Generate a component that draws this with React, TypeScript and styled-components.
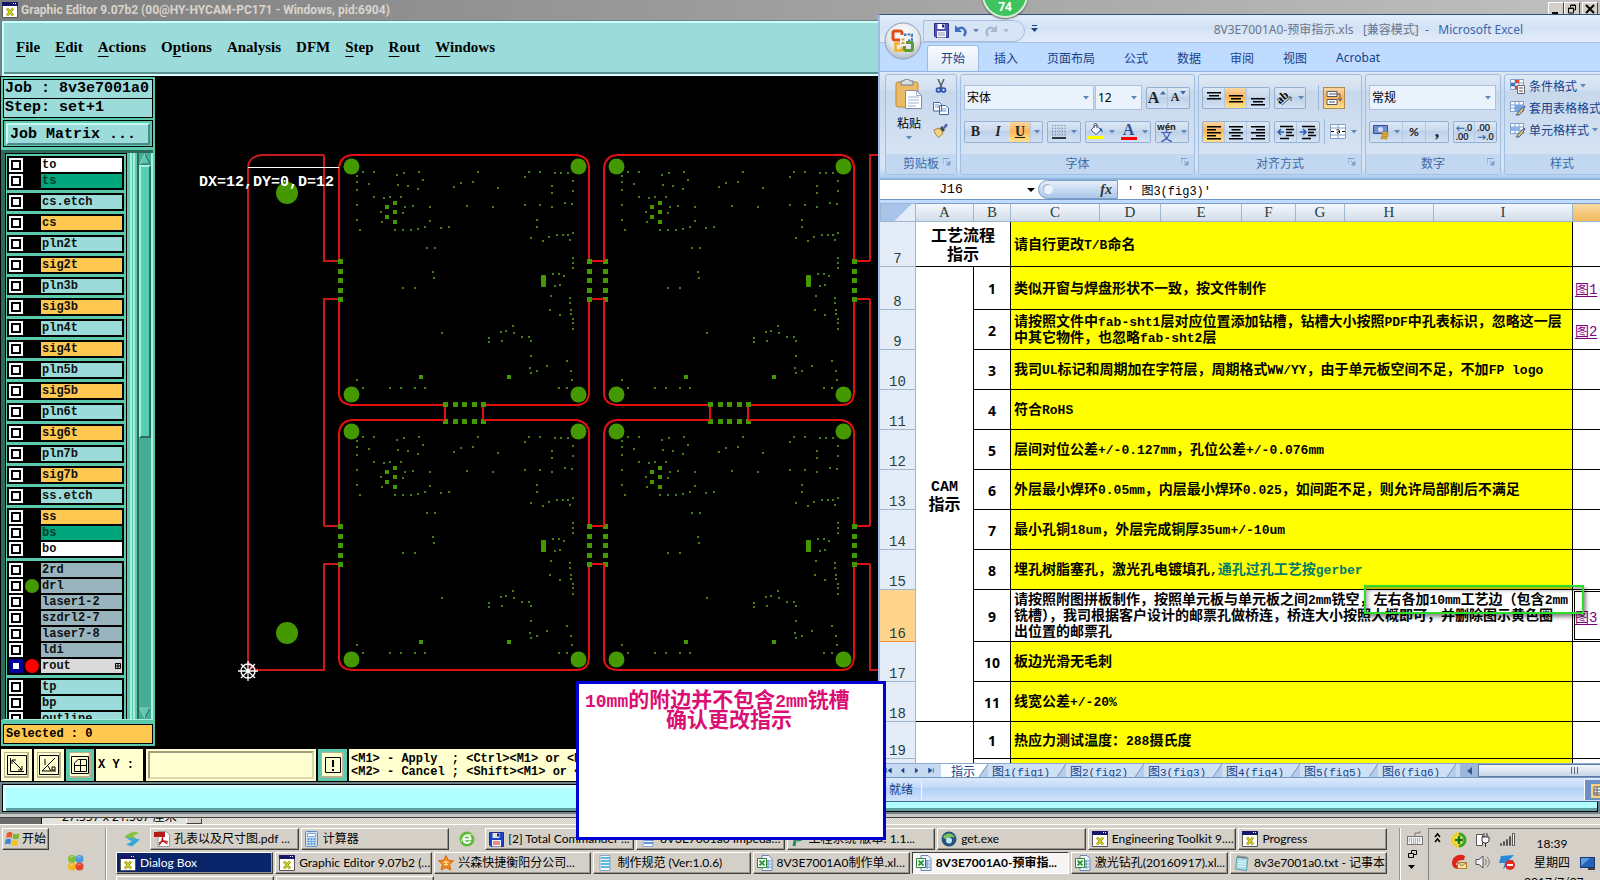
import React from 'react';
import styled, { createGlobalStyle, css } from 'styled-components';

const MONO = '"Liberation Mono", "Noto Sans CJK SC", monospace';
const SERIF = '"Liberation Serif", "Noto Sans CJK SC", serif';
const UI = '"Noto Sans", "Noto Sans CJK SC", sans-serif';
const TASK = 'Lato, "Noto Sans CJK SC", sans-serif';
const CJK = '"Noto Sans CJK SC", sans-serif';

const Global = createGlobalStyle`
  * { box-sizing: border-box; }
  body { margin: 0; overflow: hidden; font-family: ${UI}; font-size: 12px; color: #000; }
  button, input, select { font: inherit; color: inherit; margin: 0; border-radius: 0; }
  button { padding: 0; border: 0; background: none; text-align: left; white-space: nowrap; }
  svg { display: block; flex: none; }
`;

const Desktop = styled.div`
  position: relative;
  display: flex;
  flex-direction: column;
  height: 100vh;
  min-height: 600px;
  overflow: hidden;
  background: #d4d0c8;
`;

/* ---------- Mixed Chinese / half-width text ---------- */

const Half = styled.span<{ $size: number }>`
  font-family: ${MONO};
  font-size: ${(p) => p.$size}px;
  line-height: 0;
`;

function Mixed({ text, size }: { text: string; size: number }) {
  const parts = text.split(/([\x20-\x7e]+)/).filter(Boolean);
  return (
    <>
      {parts.map((p, i) => (/^[\x20-\x7e]/.test(p) ? <Half key={i} $size={size}>{p}</Half> : <React.Fragment key={i}>{p}</React.Fragment>))}
    </>
  );
}

/* ---------- Graphic editor window ---------- */

const Editor = styled.section`
  flex: 1;
  min-height: 0;
  display: flex;
  flex-direction: column;
  background: #6e8486;
`;

const TitleBar = styled.header`
  display: flex;
  align-items: center;
  gap: 3px;
  height: 20px;
  padding: 0 0 0 2px;
  flex: none;
  background: linear-gradient(90deg, #7f7f7f, #c0c0c0);
  color: #d8d4cc;
  font: bold 12px Roboto, sans-serif;
  white-space: nowrap;
`;

const WinButtons = styled.div`
  display: flex;
  margin: 2px 2px 0 auto;
  align-self: flex-start;
`;

const WinButton = styled.button<{ $apart?: boolean }>`
  width: 16px;
  height: 14px;
  display: flex;
  align-items: center;
  justify-content: center;
  margin-left: ${(p) => (p.$apart ? 2 : 0)}px;
  background: #d4d0c8;
  border: 1px solid;
  border-color: #fff #404040 #404040 #fff;
`;

const MenuBar = styled.nav`
  display: flex;
  align-items: center;
  gap: 15px;
  height: 55px;
  flex: none;
  margin: 1px 0 0 2px;
  padding: 0 12px 4px;
  background: #9bdcdb;
  border: 2px solid;
  border-color: #c8fffb #c8fffb #d8fffc #c8fffb;
  box-shadow: inset 0 -2px #5a8f92;
`;

const MenuItem = styled.button`
  font: bold 15px/20px ${SERIF};
  u { text-underline-offset: 4px; text-decoration-thickness: 1px; }
`;

const Work = styled.div`
  flex: 1;
  min-height: 0;
  display: flex;
  background: #000;
  padding: 1px 0 2px;
`;

const SidePanel = styled.aside`
  width: 155px;
  flex: none;
  display: flex;
  flex-direction: column;
  padding: 2px;
  background: #5cc9ad;
  border-left: 1px solid #000;
`;

const InfoBox = styled.div`
  height: 20px;
  flex: none;
  padding: 0 1px;
  border: 1px solid #000;
  background: #9bdbda;
  font: bold 15px/18px ${MONO};
  white-space: nowrap;
  & + & { border-top: 0; height: 19px; }
`;

const MatrixFrame = styled.div`
  height: 27px;
  flex: none;
  margin: 2px 0 3px;
  padding: 2px;
  border: 1px solid #000;
  background: #5cc9ad;
`;

const MatrixButton = styled.button`
  width: 100%;
  height: 22px;
  padding: 0 2px;
  background: #9bdbda;
  border: 2px solid;
  border-color: #c6fbf5 #4b8b8b #4b8b8b #c6fbf5;
  font: bold 15px/17px ${MONO};
`;

const LayerArea = styled.div`
  flex: 1;
  min-height: 0;
  display: flex;
  margin: 0 0 0 -2px;
  border-left: 4px solid #2f6b5c;
  border-top: 3px solid #2f6b5c;
  border-bottom: 1px solid #a6f0de;
`;

const LayerList = styled.div`
  width: 122px;
  flex: none;
  display: flex;
  flex-direction: column;
  gap: 3px;
  padding: 2px 2px 0 1px;
  overflow: hidden;
  border: 1px solid #000;
  border-bottom: 0;
`;

const LayerGroup = styled.div`
  flex: none;
  padding: 1px 2px;
  background: #000;
`;

const LayerRow = styled.label`
  display: flex;
  align-items: center;
  height: 16px;
`;

const LayerCheck = styled.input<{ $active?: boolean }>`
  appearance: none;
  width: 14px;
  height: 14px;
  flex: none;
  border: 2px solid ${(p) => (p.$active ? '#00009c' : '#fff')};
  outline: 0;
  background: #fff;
  box-shadow: inset 0 0 0 2px ${(p) => (p.$active ? '#00009c' : '#000')};
`;

const LayerDot = styled.span<{ $color?: string }>`
  width: 14px;
  height: 14px;
  margin: 0 2px;
  border-radius: 7px;
  background: ${(p) => p.$color || 'transparent'};
`;

const LayerName = styled.span<{ $color: string; $dark?: boolean }>`
  flex: 1;
  height: 14px;
  padding: 0 1px;
  display: flex;
  justify-content: space-between;
  align-items: center;
  background: ${(p) => p.$color};
  color: ${(p) => (p.$dark ? '#003d2c' : '#101010')};
  font: bold 12px/14px ${MONO};
`;

const Rail = styled.div`
  flex: 1;
  background: linear-gradient(90deg, #5cc9ad 3px, #a6f0de 3px, #a6f0de 5px, #5cc9ad 5px, #5cc9ad 6px, #a6f0de 6px, #a6f0de 8px, #5cc9ad 8px);
`;

const ScrollTrack = styled.div`
  width: 16px;
  flex: none;
  display: flex;
  flex-direction: column;
  align-items: stretch;
  background: #43ad97;
  border-left: 2px solid #2f6b5c;
  border-right: 2px solid #a6f0de;
`;

const ScrollThumb = styled.div`
  flex: 0 1 273px;
  background: #52d0b1;
  border: 2px solid;
  border-color: #a6f0de #2f6b5c #2f6b5c #a6f0de;
`;

const ScrollSpace = styled.div`
  flex: 1;
`;

const Selected = styled.div`
  height: 20px;
  flex: none;
  margin-top: 4px;
  padding: 0 2px;
  border: 1px solid #000;
  background: #ffc850;
  font: bold 12px/18px ${MONO};
`;

const Canvas = styled.svg`
  flex: 1;
  min-width: 0;
  height: 100%;
`;

const CommandBar = styled.div`
  display: flex;
  align-items: stretch;
  gap: 2px;
  height: 34px;
  flex: none;
  padding: 1px 0 1px 1px;
  background: #000;
`;

const ToolButton = styled.button<{ $teal?: boolean; $w: number }>`
  width: ${(p) => p.$w}px;
  flex: none;
  display: flex;
  align-items: center;
  justify-content: center;
  background: #ffffcf;
  border: 3px solid ${(p) => (p.$teal ? '#5cc9ad' : '#ffffcf')};
  box-shadow: inset -2px -2px #b9b28f, inset 1px 1px #b9b28f;
`;

const XYLabel = styled.label`
  width: 47px;
  flex: none;
  padding: 0 2px;
  background: #ffffcf;
  font: bold 12px/32px ${MONO};
`;

const XYField = styled.div`
  width: 171px;
  flex: none;
  padding: 2px;
  background: #ffffcf;
  border-left: 1px solid #000;
`;

const XYInput = styled.input`
  width: 100%;
  height: 28px;
  padding: 0 4px;
  background: #ffffcf;
  border: 2px solid;
  border-color: #a39c80 #ddd6ae #ddd6ae #a39c80;
  outline: 0;
  font: 12px ${MONO};
`;

const Help = styled.pre`
  flex: 1;
  margin: 0;
  padding: 4px 2px 0;
  background: #ffffcf;
  font: bold 12px/13px ${MONO};
`;

const MessageFrame = styled.div`
  height: 35px;
  flex: none;
  padding: 2px 2px 2px;
  background: #6e8486;
  border-bottom: 3px solid #c8c8c4;
`;

const MessageLine = styled.div`
  height: 28px;
  background: #b2ffff;
  border: 1px solid #000;
  box-shadow: inset 3px 3px #d4ffff, inset 0 -3px #5f9ea0;
`;

const BackStrip = styled.div`
  display: flex;
  align-items: flex-start;
  height: 7px;
  flex: none;
  overflow: hidden;
  border-top: 1px solid #404040;
  background: repeating-conic-gradient(#cfccc4 0 25%, #e6e4df 0 50%) 0 0 / 2px 2px;
`;

const BackDark = styled.div`
  width: 42px;
  height: 6px;
  background: #6b6b6b;
  border-right: 1px solid #000;
`;

const BackSize = styled.div`
  width: 144px;
  height: 6px;
  padding-left: 20px;
  background: #e4e2dd;
  overflow: hidden;
  line-height: 16px;
  span { display: block; margin-top: -9px; }
`;

const BackButton = styled.div`
  width: 16px;
  height: 6px;
  background: #d4d0c8;
  border: 1px solid;
  border-color: #d4d0c8 #404040 #404040 #fff;
`;

/* ---------- Taskbar ---------- */

const Taskbar = styled.footer`
  display: flex;
  height: 56px;
  flex: none;
  overflow: hidden;
  border-top: 1px solid #fff;
  padding: 3px 0 0 2px;
  background: #d4d0c8;
  font: 12px/16px ${TASK};
`;

const raised = css`
  border: 1px solid;
  border-color: #fff #404040 #404040 #fff;
  box-shadow: inset -1px -1px #9a968e;
`;

const StartArea = styled.div`
  width: 104px;
  flex: none;
  border-right: 1px solid #9a968e;
`;

const StartButton = styled.button`
  display: flex;
  align-items: center;
  gap: 1px;
  width: 47px;
  height: 22px;
  padding-left: 1px;
  background: #d4d0c8;
  ${raised}
`;

const Balls = styled.div`
  margin: 4px 0 0 65px;
`;

const TaskRows = styled.div`
  flex: 1;
  min-width: 0;
  display: flex;
  flex-direction: column;
  gap: 2px;
  padding: 0 12px 0 9px;
  border-left: 1px solid #fff;
`;

const TaskRow = styled.div`
  display: flex;
  gap: 2px;
  height: 22px;
  flex: none;
`;

const QuickSlot = styled.div`
  width: 32px;
  flex: none;
  display: flex;
  align-items: center;
  padding-left: 8px;
`;

const Task = styled.button<{ $state?: 'dialog' | 'active' }>`
  flex: 1 1 0;
  min-width: 0;
  display: flex;
  align-items: center;
  gap: 4px;
  padding: 0 0 0 3px;
  background: #d4d0c8;
  ${raised}
  ${(p) => p.$state === 'dialog' && css`background: #0a246a; color: #fff;`}
  ${(p) => p.$state === 'active' && css`
    background: #f6f5f3;
    border-color: #404040 #fff #fff #404040;
    box-shadow: none;
    font-weight: bold;
  `}
  span { overflow: hidden; text-overflow: ellipsis; }
`;

const EmptyTask = styled.div`
  width: 158px;
  height: 20px;
  ${raised}
`;

const Lang = styled.div`
  width: 29px;
  flex: none;
  padding: 3px 0 0 7px;
  display: flex;
  flex-direction: column;
  gap: 4px;
  border-left: 1px solid #9a968e;
  box-shadow: inset 1px 0 #fff;
`;

const Tray = styled.div`
  width: 172px;
  flex: none;
  display: flex;
  border: 1px solid #808080;
  border-width: 1px 0 0 1px;
`;

const TrayIcons = styled.div`
  display: grid;
  grid-template-columns: 17px 24px 24px 16px;
  grid-auto-rows: 17px;
  gap: 5px 0;
  padding: 3px 0 0 5px;
`;

const Clock = styled.div`
  width: 56px;
  flex: none;
  margin-left: 9px;
  padding-top: 5px;
  text-align: center;
  line-height: 19px;
`;

const ShowDesk = styled.button`
  align-self: flex-start;
  margin: 28px 0 0;
`;

/* ---------- Spreadsheet window ---------- */

const Excel = styled.section`
  position: absolute;
  top: 14px;
  right: 0;
  bottom: 78px;
  width: calc(45% + 2px);
  display: flex;
  flex-direction: column;
  overflow: hidden;
  border-top: 1px solid #2f4f7f;
  border-left: 2px solid #9dbde8;
  border-bottom: 1px solid #3f6a90;
  background: #bfdbff;
`;

const XlTitle = styled.header`
  height: 28px;
  flex: none;
  display: flex;
  align-items: center;
  padding: 0 77px 0 43px;
  background: linear-gradient(#e4eefb 0, #d3e2f6 45%, #e3ecf9);
  border-bottom: 1px solid #a9c5e8;
  white-space: nowrap;
`;

const OfficeButton = styled.button`
  position: absolute;
  left: 4px;
  top: 7px;
`;

const Quick = styled.div`
  display: flex;
  align-items: center;
  gap: 5px;
  width: 102px;
  height: 22px;
  margin-top: 4px;
  padding-left: 10px;
  border: 1px solid #a6bfdf;
  border-radius: 0 11px 11px 0;
  background: #d6e4f6;
`;

const More = styled.button`
  margin-left: 6px;
`;

const XlCaption = styled.div`
  margin-left: auto;
  font-size: 12px;
  color: #6d7485;
  b { font-weight: normal; color: #3f66a8; }
`;

const XlTabs = styled.nav`
  display: flex;
  align-items: flex-end;
  gap: 1px;
  height: 28px;
  flex: none;
  padding-left: 47px;
`;

const XlTab = styled.button<{ $on?: boolean }>`
  height: 26px;
  padding: 0 14px 1px;
  color: #15428b;
  ${(p) => p.$on && css`
    background: linear-gradient(#fafcff, #dfe9f6);
    border: 1px solid #9bbbe3;
    border-bottom: 0;
    border-radius: 3px 3px 0 0;
    padding: 0 13px 2px;
  `}
`;

const Ribbon = styled.div`
  display: flex;
  gap: 3px;
  height: 109px;
  flex: none;
  padding: 2px 5px 3px;
  background: linear-gradient(#dde8f5, #c7d9ee 20%, #d8e6f6 90%, #a9cdf0);
  border-top: 1px solid #8db2e3;
  border-bottom: 2px solid #8fb5df;
`;

const Group = styled.div<{ $w: number }>`
  width: ${(p) => p.$w}px;
  flex: none;
  display: flex;
  flex-direction: column;
  border: 1px solid #a3bfdf;
  border-radius: 3px;
  background: linear-gradient(#dee8f5, #d3e0f0 15%, #c8d8eb 16%, #d9e6f6);
  overflow: hidden;
`;

const GroupBody = styled.div`
  flex: 1;
  display: flex;
  padding: 10px 3px 0;
  flex-direction: column;
  gap: 9px;
`;

const GroupLabel = styled.div`
  position: relative;
  height: 20px;
  flex: none;
  line-height: 20px;
  text-align: center;
  background: #c1d8f0;
  color: #3e6aaa;
  svg { position: absolute; right: 5px; top: 4px; }
`;

const Line = styled.div<{ $gap?: number }>`
  display: flex;
  align-items: center;
  gap: ${(p) => p.$gap ?? 4}px;
  height: 25px;
`;

const ClipBody = styled.div`
  flex: 1;
  display: flex;
  gap: 10px;
  padding: 4px 0 0 9px;
`;

const Stack = styled.div<{ $gap: number }>`
  display: flex;
  flex-direction: column;
  align-items: center;
  gap: ${(p) => p.$gap}px;
`;

const PasteButton = styled.button`
  display: flex;
  flex-direction: column;
  align-items: center;
  gap: 4px;
  align-self: flex-start;
`;

const Combo = styled.label<{ $w: number }>`
  position: relative;
  display: block;
  width: ${(p) => p.$w}px;
  select {
    appearance: none;
    width: 100%;
    height: 25px;
    padding: 0 2px;
    border: 1px solid #abc1de;
    background: #eaf2fb;
    font-size: 12px;
    outline: 0;
  }
  svg { position: absolute; right: 5px; top: 11px; }
`;

const BtnSet = styled.div`
  display: flex;
  height: 22px;
  border: 1px solid #96b0d4;
  border-radius: 2px;
  background: linear-gradient(#dbe7f5, #c9d9ec 45%, #bdd0e8 46%, #d3e2f4);
`;

const Btn = styled.button<{ $w: number; $on?: boolean; $font?: string; $plain?: boolean }>`
  width: ${(p) => p.$w}px;
  display: flex;
  align-items: center;
  justify-content: center;
  gap: 5px;
  border-right: 1px solid ${(p) => (p.$plain ? 'transparent' : '#b3c8e3')};
  font: ${(p) => p.$font || 'bold 14px ' + SERIF};
  color: #222;
  ${(p) => p.$on && css`background: linear-gradient(#fbd7a0, #f9b45c 45%, #fbc563 60%, #fde08c);`}
  &:last-child { border-right: 0; }
`;

const SizeMark = styled.span`
  align-self: flex-start;
  margin: 3px 0 0 -4px;
`;

const WrapBtn = styled.button`
  width: 22px;
  height: 22px;
  display: grid;
  place-items: center;
  border: 1px solid #b08d4e;
  background: linear-gradient(#f9d3a0, #f5b35b 50%, #fde08c);
`;

const Divider = styled.i`
  width: 1px;
  height: 25px;
  background: #9db8da;
`;

const StyleButton = styled.button`
  display: flex;
  align-items: center;
  gap: 3px;
  height: 16px;
  color: #15428b;
`;

const StyleBody = styled.div`
  flex: 1;
  display: flex;
  flex-direction: column;
  gap: 6px;
  padding: 3px 5px;
`;

const FormulaBar = styled.div`
  display: flex;
  height: 20px;
  flex: none;
  background: #fff;
  border-bottom: 1px solid #6f96c2;
`;

const NameBox = styled.label`
  position: relative;
  width: 158px;
  flex: none;
  input {
    width: 100%;
    height: 19px;
    padding: 0 16px 0 0;
    border: 0;
    outline: 0;
    text-align: center;
    background: #fff;
    font: 13px ${MONO};
  }
  svg { position: absolute; right: 3px; top: 8px; }
`;

const FxPill = styled.div`
  display: flex;
  align-items: center;
  justify-content: space-between;
  width: 80px;
  flex: none;
  padding: 0 5px;
  border: 1px solid #7f9dc4;
  border-radius: 10px 0 0 10px;
  background: linear-gradient(#e6f0fb, #aac6e8);
  font: italic bold 14px/18px ${SERIF};
  color: #333;
  &::before { content: ""; width: 9px; height: 9px; border-radius: 5px; background: #eef3f9; box-shadow: -1px -1px #9fb3cd; }
`;

const FormulaInput = styled.input`
  flex: 1;
  min-width: 0;
  height: 19px;
  border: 0;
  outline: 0;
  padding: 0 9px;
  background: #fff;
  font: 12px/18px ${MONO};
`;

const SheetView = styled.div`
  flex: 1;
  min-height: 0;
  overflow: hidden;
  margin-top: 3px;
  position: relative;
  background: #fff;
`;

const Sheet = styled.table`
  width: 761px;
  table-layout: fixed;
  border-collapse: separate;
  border-spacing: 0;
`;

const ColHead = styled.th<{ $on?: boolean }>`
  height: 19px;
  padding: 0;
  font: 15px/17px ${SERIF};
  color: #27413e;
  background: ${(p) => (p.$on ? 'linear-gradient(#f8d9a4, #f0b95c)' : 'linear-gradient(#f4f8fc, #d3dcea)')};
  border-right: 1px solid #9eb6ce;
  border-bottom: 1px solid #9eb6ce;
  border-top: 1px solid #7b9fc9;
`;

const Corner = styled.th`
  background: linear-gradient(135deg, #a9c4e9 60%, #e4ecf7 60%);
  border: 1px solid #9eb6ce;
`;

const RowHead = styled.th<{ $on?: boolean; $h: number }>`
  height: ${(p) => p.$h}px;
  padding: 0;
  vertical-align: bottom;
  font: 14px/13px ${MONO};
  color: #27413e;
  background: ${(p) => (p.$on ? '#ffd58d' : '#e4ecf7')};
  border-right: 1px solid #9eb6ce;
  border-bottom: 1px solid ${(p) => (p.$on ? '#f29536' : '#9eb6ce')};
`;

const SideCell = styled.td`
  padding: 0;
  text-align: center;
  font: bold 16px/19px ${CJK};
  white-space: pre;
  border-right: 1px solid #000;
  border-bottom: 1px solid #000;
`;

const NumCell = styled.td`
  padding: 2px 0 0;
  text-align: center;
  font: bold 14px/18px ${UI};
  border-right: 1px solid #000;
  border-bottom: 1px solid #000;
`;

const TextCell = styled.td<{ $white?: boolean }>`
  padding: 0 3px 3px;
  background: ${(p) => (p.$white ? '#fff' : '#ff0')};
  font: bold 14px/16px ${CJK};
  white-space: pre;
  border-right: 1px solid #000;
  border-bottom: 1px solid #000;
  em { font-style: normal; color: #007c6c; }
`;

const LinkCell = styled.td<{ $sel?: boolean }>`
  padding: 0 0 0 2px;
  font: 14px/16px ${CJK};
  white-space: nowrap;
  border-bottom: 1px solid #000;
  a { color: #800080; text-underline-offset: 2px; }
  ${(p) => p.$sel && css`box-shadow: inset 0 1px #fff, inset 1px 0 #fff, inset 0 -1px #fff, inset 2px 2px #000, inset 0 -2px #000;`}
`;

const Mark = styled.div`
  position: absolute;
  right: 16px;
  top: 382px;
  width: 220px;
  height: 29px;
  border: 2px solid #2bdc2b;
  box-shadow: 2px 3px 4px #0007, inset 2px 3px 4px #0005;
`;

const SheetTabs = styled.div`
  display: flex;
  height: 15px;
  flex: none;
  align-items: stretch;
  overflow: hidden;
  background: #c5d9f1;
  border-top: 1px solid #8aa9cf;
  border-bottom: 1px solid #6f96c2;
`;

const TabNav = styled.div`
  display: flex;
  align-items: center;
  gap: 8px;
  width: 61px;
  flex: none;
  padding-left: 6px;
`;

const SheetTab = styled.button<{ $on?: boolean }>`
  display: flex;
  align-items: center;
  gap: 4px;
  width: ${(p) => (p.$on ? 47 : 78)}px;
  flex: none;
  padding-left: ${(p) => (p.$on ? 10 : 4)}px;
  background: ${(p) => (p.$on ? '#fff' : '#cfe0f5')};
  color: #15428b;
  font: 12px/13px ${CJK};
  svg { margin-left: auto; }
`;

const HScroll = styled.div`
  display: flex;
  flex: 1;
  margin-left: 4px;
  background: #9db7da;
`;

const HArrow = styled.button`
  width: 18px;
  display: grid;
  place-items: center;
`;

const HThumb = styled.div`
  width: 200px;
  flex: none;
  display: flex;
  align-items: center;
  padding-left: 92px;
  border: 1px solid #5f7ba3;
  background: linear-gradient(#f2f6fb, #c9d6e8);
`;

const Status = styled.div`
  display: flex;
  align-items: center;
  height: 23px;
  flex: none;
  padding-left: 9px;
  background: linear-gradient(#dce9fa, #c3dafa 40%, #b1cff5 45%, #d0e3fc);
  color: #15428b;
  span { padding-right: 8px; border-right: 1px solid #f4f8fe; line-height: 18px; }
`;

const ViewButton = styled.button`
  width: 16px;
  height: 20px;
  margin-left: auto;
  padding: 3px 0 0 6px;
  background: #6d90c4;
  border-left: 1px solid #fff;
`;

/* ---------- Overlays ---------- */

const Note = styled.div`
  position: absolute;
  left: 36%;
  bottom: 40px;
  width: 310px;
  height: 159px;
  padding: 4px 6px;
  border: 3px solid #0000d4;
  background: #fff;
  color: #dc0f74;
  font: bold 21px/20px ${CJK};
  white-space: nowrap;
  p { margin: 0; }
  p + p { padding-left: 81px; }
`;

const Badge = styled.div`
  position: absolute;
  left: calc(55% + 102px);
  top: -28px;
  width: 46px;
  height: 46px;
  padding-top: 25px;
  border: 2px solid #d6ecd9;
  border-radius: 23px;
  background: #3ec45e;
  color: #fff;
  text-align: center;
  font: bold 12px/16px ${UI};
  box-shadow: 0 1px 2px #555;
`;

/* ---------- Icons ---------- */

const XAppIcon = () => (
  <svg width="16" height="16" viewBox="0 0 16 16">
    <path d="M.5 2h15v13.5H.5z" fill="#fff" stroke="#555" />
    <path d="M0 0h16v4H0z" fill="#16166b" />
    <path d="M11 1h1v1h-1zM13 1h1v1h-1z" fill="#fff" />
    <path d="M5 6.500l6 7M11 6.500l-6 7" stroke="#77770a" strokeWidth="2.600" />
    <path d="M5 6.500l6 7M11 6.500l-6 7" stroke="#d2d21c" strokeWidth="1.600" />
  </svg>
);

const Caret = ({ color = '#5f86b8' }: { color?: string }) => (
  <svg width="6" height="4" viewBox="0 0 6 4"><path d="M0 0h6L3 3.5z" fill={color} /></svg>
);

const CaretUp = () => (
  <svg width="6" height="4" viewBox="0 0 6 4"><path d="M0 3.500h6L3 0z" fill="#3a68ab" /></svg>
);

const Launcher = () => (
  <svg width="8" height="8" viewBox="0 0 8 8"><path d="M0 6V.5h6" fill="none" stroke="#7c9cc8" /><path d="M3 3l3 3M7 3.5V7H3.500z" stroke="#7c9cc8" fill="#7c9cc8" /></svg>
);

const Bars = ({ widths, top = 2, step = 3, align = 'left' }: { widths: number[]; top?: number; step?: number; align?: string }) => (
  <svg width="16" height="16" viewBox="0 0 16 16">
    {widths.map((w, i) => {
      const left = align === 'center' ? 8 - w / 2 : align === 'right' ? 15 - w : 1;
      return <rect key={i} x={left} y={top + i * step} width={w} height="1.500" fill="#000" />;
    })}
  </svg>
);

const IndentIcon = ({ out }: { out?: boolean }) => (
  <svg width="18" height="16" viewBox="0 0 18 16">
    <path d="M3 2.500h13M9 5.500h8M9 8.500h6M9 11.500h8M3 14.500h9" stroke="#000" strokeWidth="1.500" />
    <path d={out ? 'M7 8H2M4 5L1 8l3 3' : 'M1 8h5M4 5l3 3-3 3'} stroke="#2d5fb5" strokeWidth="1.500" fill="none" />
  </svg>
);

const FloppyIcon = ({ red }: { red?: boolean }) => (
  <svg width="15" height="15" viewBox="0 0 15 15">
    <path d="M.5.5h14v14H2l-1.500-1.500z" fill={red ? '#1646c8' : '#5154b4'} stroke="#2b2b86" />
    <path d="M3.500 1h7v5h-7z" fill={red ? '#e0e0e0' : '#fff'} />
    <path d="M8 1.500h2v3H8z" fill="#1a237e" />
    <path d="M3 8h9v6.500H3z" fill="#f4f4f4" />
    <path d="M4 10h7M4 12h7" stroke={red ? '#d22' : '#99b'} />
  </svg>
);

const XlsIcon = () => (
  <svg width="16" height="16" viewBox="0 0 16 16">
    <path d="M5 .5h7l3 3v12H5z" fill="#eef4ff" stroke="#6c85b0" />
    <path d="M8 6h6M8 9h6M8 12h6M11 5v9" stroke="#5d8ccc" />
    <path d="M.5 3.500h9v9h-9z" fill="#fff" stroke="#2c8236" />
    <path d="M2.500 5.500l5 5M7.500 5.500l-5 5" stroke="#2c9a3e" strokeWidth="1.800" />
  </svg>
);

const DocIcon = ({ color = '#3b6fc4' }: { color?: string }) => (
  <svg width="16" height="16" viewBox="0 0 16 16">
    <path d="M3 .5h10v15H3z" fill="#f2f8ff" stroke="#8aa7c7" />
    <path d="M4 3h9M4 6h9M4 9h9M4 12h9" stroke={color} strokeWidth="1.500" />
  </svg>
);

const PadIcon = () => (
  <svg width="16" height="16" viewBox="0 0 16 16">
    <path d="M3 2l11 1-1.500 12.500L1.500 14z" fill="#a9dbe6" stroke="#5b9fb0" />
    <path d="M4 .5v2.500M6 .5v2.500M8 1v2.500M10 1v2.500M12 1.500v2.500" stroke="#666" />
    <path d="M4 6l8 .7M4 8.500l8 .7M3.500 11l8 .7" stroke="#e9fafd" />
  </svg>
);

const PdfIcon = () => (
  <svg width="16" height="16" viewBox="0 0 16 16">
    <path d="M4 .5h8l3.500 3.500v11.500H4z" fill="#fff" stroke="#999" />
    <path d="M0 1h11v5H0z" fill="#b31b1b" />
    <path d="M5 14c2-2 4-6 3.500-9M5 12c3-2 7-2.500 9-1M8 7c1 3 3 5 5.500 5.500" fill="none" stroke="#c0201f" strokeWidth="1.400" />
  </svg>
);

const CalcIcon = () => (
  <svg width="14" height="16" viewBox="0 0 14 16">
    <rect x=".5" y=".5" width="12" height="15" rx="1" fill="#cfe3f5" stroke="#5a8fc4" />
    <path d="M2.500 2.500h8v3h-8z" fill="#fff" stroke="#7aa7d6" />
    <path d="M2.500 8h8M2.500 10.500h8M2.500 13h8" stroke="#3f87c9" strokeWidth="1.500" strokeDasharray="2 1" />
  </svg>
);

const StarIcon = () => (
  <svg width="16" height="16" viewBox="0 0 16 16">
    <path d="M8 .5l2.300 4.700 5.200.6-3.900 3.600 1.200 5.600L8 12.300 3.200 15l1.200-5.600L.5 5.800l5.200-.6z" fill="#f08a1e" stroke="#d9660c" />
    <path d="M5.500 7h5M6 9.500h4M8 5.500v5" stroke="#ffe9b0" />
  </svg>
);

const BrowserIcon = () => (
  <svg width="16" height="16" viewBox="0 0 16 16">
    <circle cx="8" cy="8" r="7.500" fill="#5ebb3b" />
    <path d="M4.500 8.300h7c0-5-7-5-7 0 0 4.400 5.500 4.500 6.700 1.800" fill="none" stroke="#fff" strokeWidth="2" />
    <path d="M2 11C4 4 10 2 14 4" stroke="#d6f3a8" fill="none" />
  </svg>
);

const SwirlIcon = () => (
  <svg width="17" height="16" viewBox="0 0 17 16">
    <path d="M2 4l8-3.500 5 1.500-6 3 4 3L1 6.500z" fill="#86c440" />
    <path d="M1 6l10 1.500 5 1-8 7-6-2 6-3z" fill="#35a9dc" />
  </svg>
);

const GreenP = () => (
  <svg width="14" height="16" viewBox="0 0 14 16"><path d="M3 15L5 4c4-3 8-1 7 2s-4 3-6 3" fill="none" stroke="#1c8f5c" strokeWidth="3" /></svg>
);

const GetIcon = () => (
  <svg width="16" height="16" viewBox="0 0 16 16">
    <circle cx="8" cy="8" r="7.500" fill="#24557a" /><path d="M2 6c4-5 9-4 12 0-3 1-5-1-7 1s-3 1-5-1z" fill="#7cc45a" />
    <circle cx="8" cy="9.500" r="3" fill="#bfe4f4" />
  </svg>
);

const WinFlag = () => (
  <svg width="17" height="16" viewBox="0 0 17 16">
    <path d="M3 2c2-1.500 4-1 5.500 0L7.500 7C6 6 4 6 2 7z" fill="#ea5b24" />
    <path d="M9.500 2.500c2 1 4 1 6 0l-1 5c-2 1-4 1-6 0z" fill="#7cb82f" />
    <path d="M1.700 8.500c2-1 4-1 5.500 0l-1 5c-1.500-1-3.500-1-5.500 0z" fill="#3a87d6" />
    <path d="M8.200 9c2 1 4 1 6 0l-1 5c-2 1-4 1-6 0z" fill="#f8c118" />
  </svg>
);

const BallsIcon = () => (
  <svg width="18" height="18" viewBox="0 0 18 18">
    <circle cx="5" cy="5" r="4" fill="#7cbf3a" /><circle cx="12.500" cy="5" r="4" fill="#4a9be0" />
    <circle cx="5" cy="12.500" r="4" fill="#f4b51f" /><circle cx="12.500" cy="12.500" r="4" fill="#e2452e" />
    <path d="M3 4c1-1.500 2-1.500 3-1M10.500 4c1-1.500 2-1.500 3-1M3 11.500c1-1.500 2-1.500 3-1M10.500 11.500c1-1.500 2-1.500 3-1" stroke="#fff8" fill="none" />
  </svg>
);

const OfficeLogo = () => (
  <svg width="38" height="38" viewBox="0 0 38 38">
    <defs>
      <radialGradient id="orb" cx="50%" cy="30%" r="75%"><stop offset="0" stopColor="#fff" /><stop offset=".6" stopColor="#e3e6ea" /><stop offset="1" stopColor="#aab4c2" /></radialGradient>
    </defs>
    <circle cx="19" cy="19" r="18" fill="url(#orb)" stroke="#8e9db3" />
    <path d="M16 18h-5a2 2 0 01-2-2v-5a2 2 0 012-2h5a2 2 0 012 2v2" fill="none" stroke="#dd4f16" strokeWidth="3" />
    <path d="M21 14v-1.500h7v6h-4" fill="none" stroke="#3f7fc4" strokeWidth="2" strokeDasharray="3 1" />
    <path d="M16 21.500h-4.500v7H18V25" fill="none" stroke="#f4b122" strokeWidth="2.500" />
    <path d="M22 20.500h5a1.500 1.500 0 011.500 1.500v5a1.500 1.500 0 01-1.500 1.500h-5a1.500 1.500 0 01-1.500-1.500v-3" fill="none" stroke="#5f9c37" strokeWidth="3" />
    <path d="M17.500 17.500h3M17.500 21h3" stroke="#e8962b" strokeWidth="2" />
  </svg>
);

const UndoIcon = ({ color, flip }: { color: string; flip?: boolean }) => (
  <svg width="14" height="14" viewBox="0 0 14 14">
    <g transform={flip ? 'translate(14 0) scale(-1 1)' : undefined}>
      <path d="M3 6c5-5 11 0 7 6" fill="none" stroke={color} strokeWidth="2.500" /><path d="M1 1v7h7z" fill={color} />
    </g>
  </svg>
);

const PasteIcon = () => (
  <svg width="28" height="31" viewBox="0 0 28 31">
    <rect x="1" y="3" width="22" height="25" rx="2" fill="#ecba62" stroke="#b98a3d" />
    <path d="M6 2h3c0-2.500 6-2.500 6 0h3v4H6z" fill="#d9dde3" stroke="#6f7a89" />
    <path d="M10.500 11.500h11l5 5v13h-16z" fill="#fff" stroke="#7d8ea8" />
    <path d="M21.500 11.500v5h5M13 18h11M13 21h11M13 24h11M13 27h8" fill="none" stroke="#9db4d3" />
  </svg>
);

const CutIcon = () => (
  <svg width="12" height="15" viewBox="0 0 12 15"><path d="M3 0l4 9M9 0L5 9" stroke="#55606e" strokeWidth="1.500" /><circle cx="3.500" cy="11" r="2" fill="none" stroke="#2a55b0" strokeWidth="1.700" /><circle cx="8.500" cy="11" r="2" fill="none" stroke="#2a55b0" strokeWidth="1.700" /></svg>
);

const CopyIcon = () => (
  <svg width="16" height="13" viewBox="0 0 16 13"><path d="M.5.5h6l2 2V9h-8zM6.500 3.500h6l3 2.500v6.500h-9z" fill="#fff" stroke="#3c66ab" /><path d="M2 3h4M2 5h4M8.500 7h5M8.500 9h5" stroke="#6e95cf" /></svg>
);

const BrushIcon = () => (
  <svg width="16" height="15" viewBox="0 0 16 15"><path d="M1 7l5-2 4 5-4 4.500C3 13 2 10 1 7z" fill="#f3d384" stroke="#a8823a" /><path d="M7 5l3 4 2-2-3-4z" fill="#40454f" /><path d="M10 4l3-3.500 2 1.500-3 4z" fill="#5563b8" /></svg>
);

const GridIcon = () => (
  <svg width="14" height="14" viewBox="0 0 14 14"><path d="M.5 0v12M7 0v12M13 0v12M0 .5h14M0 6.500h14M3.500 0v12M10 0v12M0 9.500h14M0 3.500h14" stroke="#6a7d9c" strokeWidth=".7" strokeDasharray="1 1.500" fill="none" /><path d="M0 13h14" stroke="#000" strokeWidth="1.500" /></svg>
);

const BucketIcon = () => (
  <svg width="16" height="17" viewBox="0 0 16 17"><path d="M3 7l5-5 5 5-5 4.500z" fill="#f3f6fb" stroke="#3f5f8f" /><path d="M6 5V1.500c0-1.500 3-1.500 3 0V5" fill="none" stroke="#555" /><path d="M12 5c2 0 3 2 2.500 5-1-2-2-2-3-2z" fill="#2d62b8" /><path d="M0 13h16v3H0z" fill="#ff0" /></svg>
);

const FontColor = styled.span`
  font: bold 16px/14px ${SERIF};
  color: #2b508e;
  border-bottom: 3px solid #f00;
  width: 16px;
  text-align: center;
`;

const Wen = styled.span`
  display: block;
  font: bold 9px/7px ${UI};
  text-align: center;
  em { display: block; font: 12px/11px ${CJK}; color: #1f43a8; }
`;

const Small = styled.span`
  font: bold 9px/9px ${TASK};
  white-space: pre;
  i { font-style: normal; color: #2d5fb5; }
`;

const CellStyleIcon = ({ k }: { k: number }) => (
  <svg width="16" height="16" viewBox="0 0 16 16">
    <path d="M.5 1.500h13v10H.5zM.5 5h13M.5 8h13M5 1.500v10M9 1.500v10" fill="#fff" stroke="#7f9ecb" />
    {k === 0 && <><path d="M5 2h4v3H5zM5 8h4v3H5z" fill="#e0402e" /><path d="M1 5h4v3H1z" fill="#3f6fc0" /><path d="M7.500 7.500h7v8h-7z" fill="#fff" stroke="#666" /><path d="M9 10h4M9 13h4" stroke="#444" /></>}
    {k === 1 && <path d="M5 5h8v6H5z" fill="#79a6e2" />}
    {k === 2 && <path d="M1 5h9v4H1z" fill="#8db4ea" />}
    {k > 0 && <path d="M6 15l5-6 4-3-2 5-4 4z" fill="#e9c25d" stroke="#3d5f9c" />}
  </svg>
);

/* ---------- Data ---------- */

type Layer = [string, string, { dot?: string; active?: boolean; dark?: boolean }?];
const AQUA = '#9bdbda';
const GOLD = '#ffc850';
const SLATE = '#9ab4bd';

const layers: Layer[][] = [
  [['to', '#fff'], ['ts', '#00a67c', { dark: true }]],
  ...(['cs.etch', 'cs', 'pln2t', 'sig2t', 'pln3b', 'sig3b', 'pln4t', 'sig4t', 'pln5b', 'sig5b', 'pln6t', 'sig6t', 'pln7b', 'sig7b', 'ss.etch'].map(
    (n, i): Layer[] => [[n, i % 2 ? GOLD : AQUA]],
  )),
  [['ss', GOLD], ['bs', '#00a67c', { dark: true }], ['bo', '#fff']],
  [['2rd', SLATE], ['drl', SLATE, { dot: '#459900' }], ['laser1-2', SLATE], ['szdrl2-7', SLATE], ['laser7-8', SLATE], ['ldi', SLATE], ['rout', '#dadada', { dot: '#f00', active: true }]],
  [['tp', AQUA], ['bp', AQUA], ['outline', AQUA]],
];

const menus: [string, string, string][] = [
  ['', 'F', 'ile'], ['', 'E', 'dit'], ['', 'A', 'ctions'], ['O', 'p', 'tions'], ['Analysis', '', ''], ['DFM', '', ''], ['', 'S', 'tep'], ['', 'R', 'out'], ['', 'W', 'indows'],
];

const vias = `33,32 44,32 27,36 27,42 27,50 27,65 27,80 30,90 39,44 44,57 54,58 60,57 71,57 67,35 74,33 89,32 93,40 68,45 78,46 88,49 51,72 52,82 75,67 83,66 73,73 100,67 100,81 95,87 88,89 81,90 73,90 65,90 111,88 119,87 124,47 131,43 143,42 148,32 168,48 137,66 163,67 97,108 105,108 103,132 104,138 73,148 85,148 112,193 195,37 199,32 210,32 225,33 231,33 238,33 243,41 243,51 222,46 222,53 222,67 195,65 210,65 235,63 242,64 207,80 207,87 201,98 213,101 219,97 227,95 233,95 238,95 243,93 240,100 243,118 243,123 243,128 223,134 229,134 234,136 225,146 230,145 221,156 220,170 230,175 240,158 240,163 241,170 241,174 243,179 243,183 243,189 159,198 159,202 171,192 176,191 183,186 184,193 172,201 192,197 199,197 201,201 201,216 200,228 201,233 207,231 217,226 237,221 241,231 242,240 229,248 237,248 27,240 33,248 60,248 71,248 85,248 95,248`
  .split(' ').map((s) => s.split(',').map(Number));
const pads = [[65, 63], [57, 67], [65, 72], [57, 77], [65, 82], [91, 237], [179, 237]];
const sideBites = [121, 131, 140, 150, 159];
const endBites = [115, 125, 134, 144, 153];

function Board({ x, y, lower, last }: { x: number; y: number; lower?: boolean; last?: boolean }) {
  return (
    <g transform={`translate(${x} ${y})`}>
      <g fill="none" stroke="#e31010" strokeWidth="2">
        <path d={lower ? 'M153 15H247Q259 18 259 28V121M259 159V253Q258 265 247 265H22Q9 264 9 253V159M9 121V28Q10 16 22 15H115M153 15' : 'M22 15H247Q259 17 259 28V121M259 159V253Q258 265 247 265H153M115 265H22Q9 264 9 253V159M9 121V28Q10 16 22 15'} />
        <path d="M259 121H275M259 159H275" />
        {!lower && <path d="M115 265v15M153 265v15" />}
      </g>
      <g fill="#459900">
        {[[21.5, 26.5], [248.5, 26.5], [21.5, 254.5], [248.5, 254.5]].map(([a, b]) => <circle key={`${a}-${b}`} cx={a} cy={b} r="8" />)}
        {vias.map(([a, b]) => <rect key={`${a}-${b}`} x={a - 1} y={b - 1} width="2" height="2" fill="#477f14" />)}
        {pads.map(([a, b]) => <rect key={`${a}-${b}`} x={a - 2} y={b - 2} width="4" height="4" />)}
        <rect x="211" y="135" width="5" height="12" rx="1" />
        {sideBites.map((b) => <g key={b}><rect x="257" y={b - 2} width="5" height="5" />{!last && <rect x="273" y={b - 2} width="5" height="5" />}</g>)}
        {!lower && endBites.map((a) => <g key={a}><rect x={a - 2} y="262" width="5" height="5" /><rect x={a - 2} y="279" width="5" height="5" /></g>)}
      </g>
    </g>
  );
}

function PanelDrawing() {
  return (
    <Canvas aria-label="Panel drawing">
      <g transform="translate(-155 -77)">
        <g fill="none" stroke="#c81818" strokeWidth="2">
          <path d="M324 155H261Q248 157 248 168V660Q250 670 259 670H324V564H339M324 526H339M324 526V299H339M324 155V261H339" />
          <path d="M885 155H870V261M870 299V526M870 564V670H885" />
        </g>
        <Board x={330} y={140} />
        <Board x={595} y={140} last />
        <Board x={330} y={405} lower />
        <Board x={595} y={405} lower last />
        <g fill="#459900">
          {[0, 265].map((dy) => sideBites.map((b) => <rect key={`${dy}-${b}`} x="338" y={138 + dy + b} width="5" height="5" />))}
          <circle cx="287" cy="193" r="11" />
          <circle cx="287" cy="633" r="11" />
        </g>
        <path d="M248 167.500H339" stroke="#fff" />
        <text x="199" y="186" fill="#fff" fontFamily="Liberation Mono, monospace" fontSize="15" fontWeight="bold">DX=12,DY=0,D=12</text>
        <g stroke="#fff" fill="none" strokeWidth="1.300">
          <circle cx="248" cy="671" r="7" />
          <path d="M238 671h20M248 661v20M241 664l14 14M255 664l-14 14" />
        </g>
      </g>
    </Canvas>
  );
}

type Row = { n: number; h: number; no?: string; side?: React.ReactNode; span?: number; text: React.ReactNode; link?: string };
const t = (s: string) => <Mixed text={s} size={13} />;

const rows: Row[] = [
  { n: 8, h: 43, no: '1', side: <><Mixed text="CAM" size={15} />{'\n指示'}</>, span: 11, text: t('类似开窗与焊盘形状不一致，按文件制作'), link: '图1' },
  { n: 9, h: 40, no: '2', text: t('请按照文件中fab-sht1层对应位置添加钻槽，钻槽大小按照PDF中孔表标识，忽略这一层\n中其它物件，也忽略fab-sht2层'), link: '图2' },
  { n: 10, h: 40, no: '3', text: t('我司UL标记和周期加在字符层，周期格式WW/YY，由于单元板空间不足，不加FP logo') },
  { n: 11, h: 40, no: '4', text: t('符合RoHS') },
  { n: 12, h: 40, no: '5', text: t('层间对位公差+/-0.127mm，孔位公差+/-0.076mm') },
  { n: 13, h: 40, no: '6', text: t('外层最小焊环0.05mm，内层最小焊环0.025，如间距不足，则允许局部削后不满足') },
  { n: 14, h: 40, no: '7', text: t('最小孔铜18um，外层完成铜厚35um+/-10um') },
  { n: 15, h: 40, no: '8', text: <>{t('埋孔树脂塞孔，激光孔电镀填孔,')}<em>{t('通孔过孔工艺按gerber')}</em></> },
  { n: 16, h: 51, no: '9', text: t('请按照附图拼板制作，按照单元板与单元板之间2mm铣空，左右各加10mm工艺边（包含2mm\n铣槽），我司根据客户设计的邮票孔做桥连，桥连大小按照大概即可，并删除图示黄色圈\n出位置的邮票孔'), link: '图3' },
  { n: 17, h: 40, no: '10', text: t('板边光滑无毛刺') },
  { n: 18, h: 40, no: '11', text: t('线宽公差+/-20%') },
  { n: 19, h: 37, no: '1', side: '', span: 2, text: t('热应力测试温度：288摄氏度') },
  { n: 20, h: 40, text: '' },
];

const cols: [string, number][] = [['A', 58], ['B', 37], ['C', 89], ['D', 61], ['E', 81], ['F', 54], ['G', 49], ['H', 89], ['I', 139]];

/* ---------- Application ---------- */

function ExcelWindow() {
  return (
    <Excel aria-label="Microsoft Excel">
      <XlTitle>
        <Quick>
          <button aria-label="Save"><FloppyIcon /></button>
          <button aria-label="Undo"><UndoIcon color="#3f6fc0" /></button>
          <Caret />
          <button aria-label="Redo"><UndoIcon color="#a9b9d0" flip /></button>
          <Caret color="#a9b9d0" />
        </Quick>
        <More aria-label="Customize"><svg width="7" height="8" viewBox="0 0 7 8"><path d="M1 0h5v1H1zM0 3h7L3.500 7z" fill="#1c3f80" /></svg></More>
        <XlCaption>8V3E7001A0-预审指示.xls&nbsp;&nbsp; [兼容模式] <b>&nbsp;-&nbsp;&nbsp; Microsoft Excel</b></XlCaption>
      </XlTitle>
      <XlTabs>
        {['开始', '插入', '页面布局', '公式', '数据', '审阅', '视图', 'Acrobat'].map((s, i) => <XlTab key={s} $on={i === 0}>{s}</XlTab>)}
      </XlTabs>
      <OfficeButton aria-label="Office"><OfficeLogo /></OfficeButton>
      <Ribbon>
        <Group $w={72}>
          <ClipBody>
            <PasteButton><PasteIcon />粘贴<Caret /></PasteButton>
            <Stack $gap={8}><CutIcon /><CopyIcon /><BrushIcon /></Stack>
          </ClipBody>
          <GroupLabel>剪贴板<Launcher /></GroupLabel>
        </Group>
        <Group $w={235}>
          <GroupBody>
            <Line $gap={1}>
              <Combo $w={130}><select aria-label="Font"><option>宋体</option></select><Caret /></Combo>
              <Combo $w={47}><select aria-label="Font size"><option>12</option></select><Caret /></Combo>
              <Line $gap={3}>
                <i />
                <BtnSet>
                  <Btn $w={21} $font={`bold 16px ${SERIF}`} aria-label="Grow font">A<SizeMark><CaretUp /></SizeMark></Btn>
                  <Btn $w={21} $font={`bold 12px ${SERIF}`} aria-label="Shrink font">A<SizeMark><Caret color="#3a68ab" /></SizeMark></Btn>
                </BtnSet>
              </Line>
            </Line>
            <Line>
              <BtnSet><Btn $w={22} $plain>B</Btn><Btn $w={23} $plain $font={`italic bold 14px ${SERIF}`}>I</Btn><Btn $w={21} $on><u>U</u></Btn><Btn $w={11} aria-label="Underline style"><Caret /></Btn></BtnSet>
              <BtnSet><Btn $w={32} aria-label="Borders"><GridIcon /><Caret /></Btn></BtnSet>
              <BtnSet><Btn $w={32} $plain aria-label="Fill"><BucketIcon /><Caret /></Btn><Btn $w={32} aria-label="Font color"><FontColor>A</FontColor><Caret /></Btn></BtnSet>
              <BtnSet><Btn $w={32} aria-label="Phonetic"><Wen>wén<em>文</em></Wen><Caret /></Btn></BtnSet>
            </Line>
          </GroupBody>
          <GroupLabel>字体<Launcher /></GroupLabel>
        </Group>
        <Group $w={164}>
          <GroupBody>
            <Line>
              <BtnSet><Btn $w={22} aria-label="Top"><Bars widths={[14, 10, 14]} align="center" /></Btn><Btn $w={22} $on aria-label="Middle"><Bars top={5} widths={[14, 10, 14]} align="center" /></Btn><Btn $w={22} aria-label="Bottom"><Bars top={8} widths={[14, 10, 14]} align="center" /></Btn></BtnSet>
              <BtnSet><Btn $w={30} aria-label="Orientation"><svg width="16" height="16" viewBox="0 0 16 16"><text x="0" y="11" fontFamily="Liberation Serif, serif" fontSize="12" fontWeight="bold" transform="rotate(-40 6 9)">ab</text><path d="M5 15l9-8M14 11V7h-4" fill="none" stroke="#555" /></svg><Caret /></Btn></BtnSet>
              <Line $gap={4}>
                <i /><i />
                <Divider />
                <WrapBtn aria-label="Wrap text"><svg width="16" height="16" viewBox="0 0 16 16"><path d="M1 1.500h10v5H1zM1 9.500h10v5H1z" fill="#fff" stroke="#556" /><path d="M3 4h11v6M12 8l2 3 2-3M3 12h6" fill="none" stroke="#556" /></svg></WrapBtn>
              </Line>
            </Line>
            <Line>
              <BtnSet><Btn $w={22} $on aria-label="Left"><Bars widths={[14, 9, 14, 9, 14]} /></Btn><Btn $w={22} aria-label="Center"><Bars widths={[14, 9, 14, 9, 14]} align="center" /></Btn><Btn $w={22} aria-label="Right"><Bars widths={[14, 9, 14, 9, 14]} align="right" /></Btn></BtnSet>
              <BtnSet><Btn $w={22} aria-label="Decrease indent"><IndentIcon out /></Btn><Btn $w={22} aria-label="Increase indent"><IndentIcon /></Btn></BtnSet>
              <Divider />
              <Btn $w={30} $plain aria-label="Merge"><svg width="16" height="15" viewBox="0 0 16 15"><path d="M.5.5h15v14H.5zM.5 4h15M.5 11h15M8 .5V4M8 11v3.500" fill="#fff" stroke="#7f9ecb" /><path d="M1 7.500h3M12 7.500h3" stroke="#000" /><path d="M6.500 6c3-1 3 0 3 3M9.500 7.500c-3 0-3 2-1 2" fill="none" stroke="#000" /></svg><Caret /></Btn>
            </Line>
          </GroupBody>
          <GroupLabel>对齐方式<Launcher /></GroupLabel>
        </Group>
        <Group $w={136}>
          <GroupBody>
            <Line><Combo $w={127}><select aria-label="Number format"><option>常规</option></select><Caret /></Combo></Line>
            <Line>
              <BtnSet><Btn $w={33} aria-label="Currency"><svg width="16" height="16" viewBox="0 0 16 16"><path d="M.5 1.500h14v8H.5z" fill="#6f8fd0" stroke="#33509a" /><circle cx="7.500" cy="5.500" r="2.500" fill="#cfe0ff" /><path d="M9 8h6v2H9zM9 10.500h6v2H9zM8 13h6v2H8z" fill="#e5b13a" stroke="#a87615" strokeWidth=".5" /></svg><Caret /></Btn><Btn $w={23} $font={`bold 12px ${TASK}`}>%</Btn><Btn $w={22} $font={`bold 18px ${SERIF}`}>,</Btn></BtnSet>
              <BtnSet><Btn $w={21} aria-label="Increase decimal"><Small><i>←</i>.0{'\n'}.00</Small></Btn><Btn $w={21} aria-label="Decrease decimal"><Small>.00{'\n'}<i>→</i>.0</Small></Btn></BtnSet>
            </Line>
          </GroupBody>
          <GroupLabel>数字<Launcher /></GroupLabel>
        </Group>
        <Group $w={116}>
          <StyleBody>
            {['条件格式', '套用表格格式', '单元格样式'].map((s, i) => <StyleButton key={s}><CellStyleIcon k={i} />{s}<Caret /></StyleButton>)}
          </StyleBody>
          <GroupLabel>样式</GroupLabel>
        </Group>
      </Ribbon>
      <FormulaBar>
        <NameBox><input aria-label="Name box" defaultValue="J16" /><svg width="8" height="4" viewBox="0 0 8 4"><path d="M0 0h8L4 4z" /></svg></NameBox>
        <FxPill>fx</FxPill>
        <FormulaInput aria-label="Formula" defaultValue="' 图3(fig3)'" />
      </FormulaBar>
      <SheetView>
        <Sheet>
          <colgroup><col width="36" />{cols.map(([c, w]) => <col key={c} width={w} />)}<col width="68" /></colgroup>
          <thead>
            <tr><Corner />{cols.map(([c]) => <ColHead key={c}>{c}</ColHead>)}<ColHead $on aria-label="J" /></tr>
          </thead>
          <tbody>
            <tr>
              <RowHead $h={45}>7</RowHead>
              <SideCell colSpan={2}>{'工艺流程\n指示'}</SideCell>
              <TextCell colSpan={7}>{t('请自行更改T/B命名')}</TextCell>
              <LinkCell />
            </tr>
            {rows.map((r) => (
              <tr key={r.n}>
                <RowHead $h={r.h} $on={r.n === 16}>{r.n < 20 && r.n}</RowHead>
                {r.span && <SideCell rowSpan={r.span}>{r.side}</SideCell>}
                <NumCell>{r.no}</NumCell>
                <TextCell colSpan={7} $white={r.n === 16}>{r.text}</TextCell>
                <LinkCell $sel={r.n === 16}>{r.link && <a href="#fig"><Mixed text={r.link} size={14} /></a>}</LinkCell>
              </tr>
            ))}
          </tbody>
        </Sheet>
        <Mark />
      </SheetView>
      <SheetTabs>
        <TabNav>
          {['M1 1v7M8 1L3 4.500 8 8z', 'M6 1L2 4.500 6 8z', 'M2 1l4 3.500L2 8z', 'M8 1v7M1 1l5 3.500L1 8z'].map((d) => <svg key={d} width="6" height="7" viewBox="0 0 9 9"><path d={d} fill="#15428b" stroke="#15428b" /></svg>)}
        </TabNav>
        {['指示', '图1(fig1)', '图2(fig2)', '图3(fig3)', '图4(fig4)', '图5(fig5)', '图6(fig6)'].map((s, i) => (
          <SheetTab key={s} $on={i === 0}><span><Mixed text={s} size={11} /></span><svg width="9" height="13" viewBox="0 0 9 13"><path d="M9 0v13H0z" fill="#b6cdea" /><path d="M9 0L0 13" stroke="#7193bf" /></svg></SheetTab>
        ))}
        <HScroll><HArrow aria-label="Scroll left"><svg width="5" height="8" viewBox="0 0 5 8"><path d="M5 0v8L0 4z" fill="#3a5a8c" /></svg></HArrow><HThumb><svg width="8" height="7" viewBox="0 0 8 7"><path d="M.5 0v7M3.500 0v7M6.500 0v7" stroke="#667" /></svg></HThumb></HScroll>
      </SheetTabs>
      <Status><span>就绪</span><ViewButton aria-label="Normal view"><svg width="14" height="14" viewBox="0 0 14 14"><path d="M0 0h14v14H0z" fill="#f7cf86" /><path d="M3 3h9v8H3zM3 6h9M3 9h9M6 3v8" fill="#fff" stroke="#555" /></svg></ViewButton></Status>
    </Excel>
  );
}

const arrow = (up: boolean) => (
  <svg width="12" height="12" viewBox="0 0 12 12"><path d={up ? 'M6 1l5 10H1z' : 'M1 1h10L6 11z'} fill="#5cc9ad" stroke="#2f6b5c" /><path d={up ? 'M6 1L1 11' : 'M1 1h10M1 1l5 10'} stroke="#a6f0de" /></svg>
);

export default function App() {
  return (
    <Desktop>
      <Global />
      <Editor>
        <TitleBar>
          <XAppIcon />Graphic Editor 9.07b2 (00@HY-HYCAM-PC171 - Windows, pid:6904)
          <WinButtons>
            <WinButton aria-label="Minimize"><svg width="10" height="10" viewBox="0 0 10 10"><path d="M1 8h6v2H1z" /></svg></WinButton>
            <WinButton aria-label="Restore"><svg width="10" height="10" viewBox="0 0 10 10"><path d="M3.500 3V1h5v5h-2M1.500 4h5v5h-5zM1 4.500h6M3 1.500h6" fill="none" stroke="#000" /></svg></WinButton>
            <WinButton $apart aria-label="Close"><svg width="10" height="10" viewBox="0 0 10 10"><path d="M1 1l8 8M9 1L1 9" stroke="#000" strokeWidth="2" /></svg></WinButton>
          </WinButtons>
        </TitleBar>
        <MenuBar>
          {menus.map(([a, u, b]) => <MenuItem key={a + u + b}>{a}<u>{u}</u>{b}</MenuItem>)}
        </MenuBar>
        <Work>
          <SidePanel>
            <InfoBox>Job : 8v3e7001a0</InfoBox>
            <InfoBox>Step: set+1</InfoBox>
            <MatrixFrame><MatrixButton>Job Matrix ...</MatrixButton></MatrixFrame>
            <LayerArea>
              <LayerList>
                {layers.map((g) => (
                  <LayerGroup key={g[0][0]}>
                    {g.map(([name, color, o]) => (
                      <LayerRow key={name}>
                        <LayerCheck type="checkbox" $active={o?.active} />
                        <LayerDot $color={o?.dot} />
                        <LayerName $color={color} $dark={o?.dark}>
                          {name}
                          {o?.active && <svg width="6" height="6" viewBox="0 0 6 6"><path d="M.5.5h5v5h-5zM3 0v6M0 3h6" fill="none" stroke="#000" /></svg>}
                        </LayerName>
                      </LayerRow>
                    ))}
                  </LayerGroup>
                ))}
              </LayerList>
              <Rail />
              <ScrollTrack>{arrow(true)}<ScrollThumb /><ScrollSpace />{arrow(false)}</ScrollTrack>
            </LayerArea>
            <Selected>Selected : 0</Selected>
          </SidePanel>
          <PanelDrawing />
        </Work>
        <CommandBar>
          <ToolButton $w={31} aria-label="Zoom area"><svg width="20" height="20" viewBox="0 0 20 20"><path d="M.5.5h19v19H.5zM3.500 3v13.500H17M5 5l10 10M5 9V5h4M15 11v4h-4" fill="none" stroke="#000" /></svg></ToolButton>
          <ToolButton $w={30} aria-label="Measure"><svg width="20" height="20" viewBox="0 0 20 20"><path d="M.5.5h19v19H.5zM3 16L16 3M3 16h14M6 4v6M9 11l3 5M13 12h3v3h-3z" fill="none" stroke="#000" /></svg></ToolButton>
          <ToolButton $w={28} $teal aria-label="Grid"><svg width="18" height="18" viewBox="0 0 18 18"><path d="M.5.5h17v17H.5zM3 9.500h12.500M9.500 3v12.500M3.500 7v8.500h12V3.500H7z" fill="none" stroke="#000" /></svg></ToolButton>
          <XYLabel htmlFor="xy">X Y :</XYLabel>
          <XYField><XYInput id="xy" /></XYField>
          <ToolButton $w={29} $teal aria-label="Alert"><svg width="16" height="16" viewBox="0 0 16 16"><path d="M.5.5h15v15H.5z" fill="none" stroke="#000" /><path d="M8 3v7M8 12v2" stroke="#000" strokeWidth="2" /></svg></ToolButton>
          <Help>{'<M1> - Apply  ; <Ctrl><M1> or <M1 M1>\n<M2> - Cancel ; <Shift><M1> or <M2 M2>'}</Help>
        </CommandBar>
        <MessageFrame><MessageLine /></MessageFrame>
      </Editor>
      <BackStrip><BackDark /><BackSize><span>27.557 x 21.567 厘米</span></BackSize><BackButton /></BackStrip>
      <Taskbar>
        <StartArea>
          <StartButton><WinFlag />开始</StartButton>
          <Balls><BallsIcon /></Balls>
        </StartArea>
        <TaskRows>
          <TaskRow>
            <QuickSlot><SwirlIcon /></QuickSlot>
            <Task><PdfIcon /><span>孔表以及尺寸图.pdf ...</span></Task>
            <Task><CalcIcon /><span>计算器</span></Task>
            <QuickSlot><BrowserIcon /></QuickSlot>
            <Task><FloppyIcon red /><span>[2] Total Commander ...</span></Task>
            <Task><DocIcon /><span>8V3E7001a0 Impedan...</span></Task>
            <Task><GreenP /><span>工程系统 版本: 1.1...</span></Task>
            <Task><GetIcon /><span>get.exe</span></Task>
            <Task><XAppIcon /><span>Engineering Toolkit 9.0...</span></Task>
            <Task><XAppIcon /><span>Progress</span></Task>
          </TaskRow>
          <TaskRow>
            <Task $state="dialog"><XAppIcon /><span>Dialog Box</span></Task>
            <Task><XAppIcon /><span>Graphic Editor 9.07b2 (0...</span></Task>
            <Task><StarIcon /><span>兴森快捷衡阳分公司...</span></Task>
            <Task><DocIcon color="#2aa5d8" /><span>制作规范 (Ver:1.0.6)</span></Task>
            <Task><XlsIcon /><span>8V3E7001A0制作单.xls ...</span></Task>
            <Task $state="active"><XlsIcon /><span>8V3E7001A0-预审指...</span></Task>
            <Task><XlsIcon /><span>激光钻孔(20160917).xl...</span></Task>
            <Task><PadIcon /><span>8v3e7001a0.txt - 记事本</span></Task>
          </TaskRow>
          <TaskRow><EmptyTask /><EmptyTask /></TaskRow>
        </TaskRows>
        <Lang>
          <svg width="16" height="14" viewBox="0 0 16 14"><path d="M8 5V2h5V0" stroke="#777" fill="none" /><rect x=".5" y="5.500" width="15" height="8" fill="#eee" stroke="#777" /><path d="M2 8h12M2 10h12M4 12h8" stroke="#777" strokeDasharray="1 1" /></svg>
          <svg width="12" height="22" viewBox="0 0 12 22"><path d="M4.500 4.500v-3h5v4h-3M1.500 4.500h5v4h-5z" fill="none" stroke="#000" /><path d="M1 16h7l-3.500 4z" /></svg>
        </Lang>
        <Tray>
          <TrayIcons>
            <svg width="7" height="11" viewBox="0 0 7 11"><path d="M1 5l2.500-3L6 5M1 10l2.500-3L6 10" fill="none" stroke="#000" strokeWidth="1.500" /></svg>
            <svg width="16" height="16" viewBox="0 0 16 16"><circle cx="8" cy="8" r="7.500" fill="#f2cf1d" /><path d="M8 .5a7.500 7.500 0 010 15z" fill="#2fa639" /><circle cx="8" cy="8" r="4.500" fill="#eaf04c" /><path d="M8 4v8M4 8h8" stroke="#1c6e23" strokeWidth="2.500" /></svg>
            <svg width="16" height="16" viewBox="0 0 16 16"><path d="M1.500 2.500h6v11h-6z" fill="#fff" stroke="#555" /><path d="M7 5h7v4l-2 2H9L7 9zM9 5V1M12 5V1M10.500 11v4" fill="#fff" stroke="#333" /></svg>
            <svg width="17" height="16" viewBox="0 0 17 16"><path d="M1.500 11.500h1v2h-1zM4.500 9.500h1v4h-1zM7.500 7.500h1v6h-1zM10.500 4.500h1v9h-1zM13.500 1.500h2v12h-2z" fill="#fff" stroke="#555" /></svg>
            <i />
            <svg width="16" height="16" viewBox="0 0 16 16"><path d="M14 2C9-1 1 2 1 9c0 4 3 6 7 6V11H5c0-4 4-5 8-5z" fill="#e0241b" /><path d="M6.500 8.500h9v6h-9zM6.500 8.500l4.500 3.500 4.500-3.500" fill="#fbe7a2" stroke="#b47d1e" /></svg>
            <svg width="16" height="16" viewBox="0 0 16 16"><path d="M1 5.500h3L8 2v12L4 10.500H1z" fill="#eee" stroke="#555" /><path d="M10 5c1.500 2 1.500 4 0 6M12 3c3 3 3 7 0 10" fill="none" stroke="#777" /></svg>
            <svg width="16" height="16" viewBox="0 0 16 16"><path d="M2 2l13-1-5 5h5L4 15 6 9H0z" fill="#2689dc" /><circle cx="11" cy="11" r="5" fill="#e0281e" /><path d="M8 11h6" stroke="#fff" strokeWidth="2" /></svg>
            <i /><svg width="16" height="8" viewBox="0 0 16 8"><path d="M8 8l3-4v4z" fill="#e0281e" /></svg>
          </TrayIcons>
          <Clock>18:39<br />星期四<br />2017/7/27</Clock>
          <ShowDesk aria-label="Show desktop"><svg width="16" height="14" viewBox="0 0 16 14"><rect x=".5" y=".5" width="14" height="10" fill="#2463b8" stroke="#16366c" /><path d="M1 9l9-8H1z" fill="#5c9be6" /><path d="M8 12h7" stroke="#444" strokeWidth="2" /></svg></ShowDesk>
        </Tray>
      </Taskbar>
      <ExcelWindow />
      <Note><p><Mixed text="10mm的附边并不包含2mm铣槽" size={18} /></p><p>确认更改指示</p></Note>
      <Badge>74</Badge>
    </Desktop>
  );
}
